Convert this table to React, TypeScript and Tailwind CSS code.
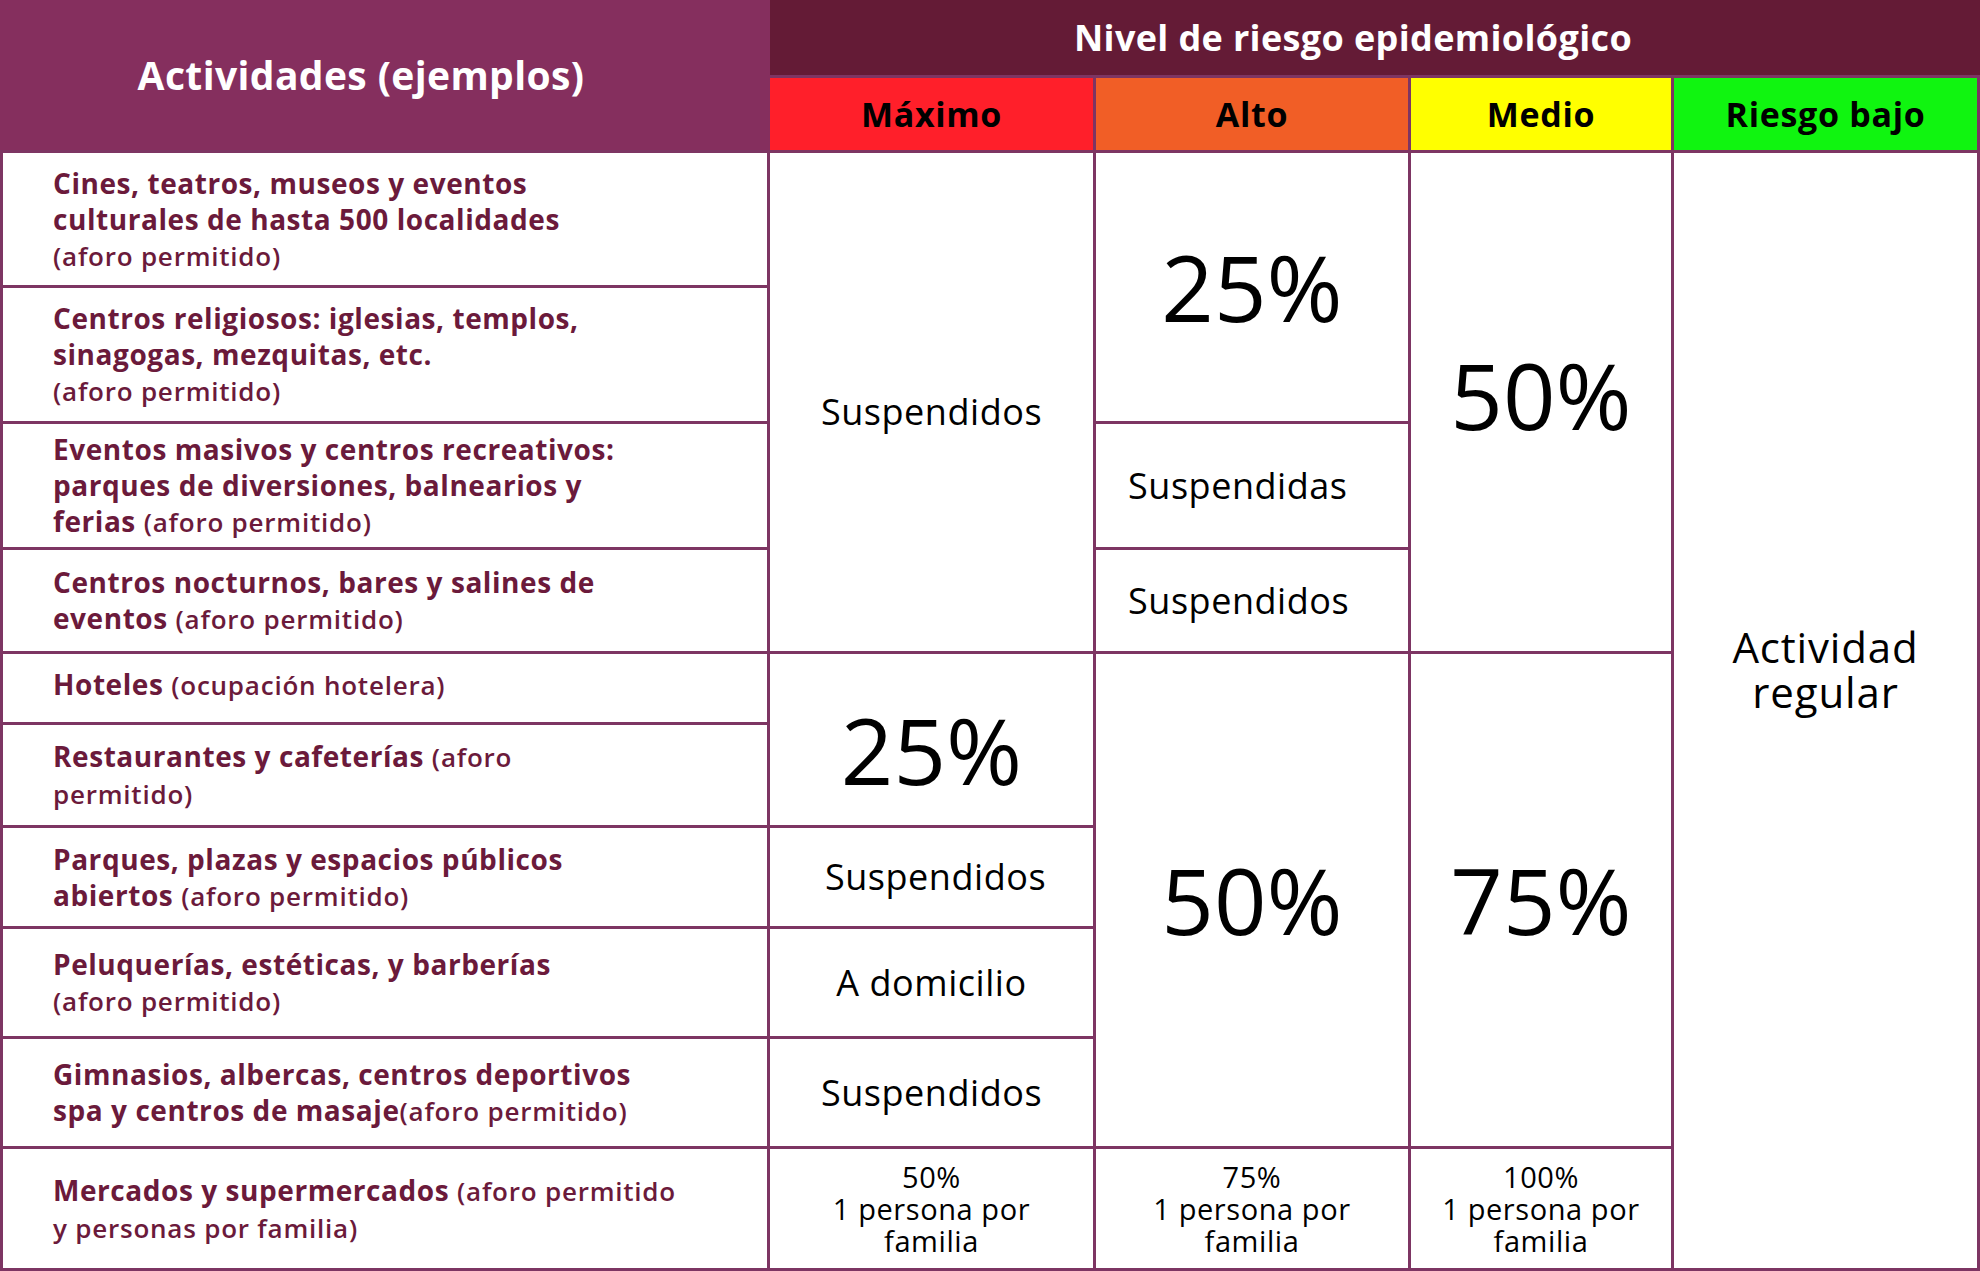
import type { ReactNode } from "react";

const font = { fontFamily: "'Open Sans', 'Noto Sans', sans-serif" };

function Note({ children }: { children: ReactNode }) {
	return (
		<span className="font-semibold text-[26px] tracking-[0.03em]">
			{children}
		</span>
	);
}

function Activity({
	row,
	className = "",
	children,
}: {
	row: string;
	className?: string;
	children: ReactNode;
}) {
	return (
		<div
			className={`${row} col-start-1 flex items-center bg-white pl-[50px] font-bold text-[#6b1a3b] text-[28px] leading-[36px] tracking-[0.02em] whitespace-nowrap ${className}`}
		>
			<p>{children}</p>
		</div>
	);
}

function Cell({
	className,
	children,
}: {
	className: string;
	children?: ReactNode;
}) {
	return (
		<div
			className={`flex items-center justify-center bg-white text-center text-black ${className}`}
		>
			{children}
		</div>
	);
}

function Word({ className, children }: { className: string; children: ReactNode }) {
	return (
		<Cell className={`font-medium text-[36px] tracking-[0.015em] ${className}`}>
			{children}
		</Cell>
	);
}

function Family({ pct, col }: { pct: string; col: string }) {
	return (
		<Cell className={`${col} row-start-12 text-[29px] leading-[32px] tracking-[0.02em]`}>
			<p>
				{pct}
				<br />1 persona por
				<br />
				familia
			</p>
		</Cell>
	);
}

export default function App() {
	return (
		<div
			style={font}
			className="grid h-[1271px] w-[1980px] grid-cols-[764px_323px_312px_260px_303px] grid-rows-[75px_72px_132px_133px_123px_101px_68px_100px_98px_107px_107px_119px] gap-[3px] bg-[#7d3563] px-[3px] pb-[3px]"
		>
			{/* header */}
			<div className="col-start-1 row-span-2 row-start-1 -mx-[3px] flex items-center justify-center bg-[#852f5e] pr-[48px] font-bold text-[39px] text-white tracking-[0.01em]">
				Actividades (ejemplos)
			</div>
			<div className="col-span-4 col-start-2 row-start-1 -mr-[3px] flex items-center justify-center bg-[#641b36] pr-[44px] font-bold text-[36px] text-white tracking-[0.01em]">
				Nivel de riesgo epidemiológico
			</div>
			<div className="col-start-2 row-start-2 flex items-center justify-center bg-[#ff1f2a] font-bold text-[34px] text-black tracking-[0.02em]">
				Máximo
			</div>
			<div className="col-start-3 row-start-2 flex items-center justify-center bg-[#f15e26] font-bold text-[34px] text-black tracking-[0.02em]">
				Alto
			</div>
			<div className="col-start-4 row-start-2 flex items-center justify-center bg-[#ffff00] font-bold text-[34px] text-black tracking-[0.02em]">
				Medio
			</div>
			<div className="col-start-5 row-start-2 flex items-center justify-center bg-[#10f510] font-bold text-[34px] text-black tracking-[0.02em]">
				Riesgo bajo
			</div>

			{/* activities */}
			<Activity row="row-start-3">
				Cines, teatros, museos y eventos
				<br />
				culturales de hasta 500 localidades
				<br />
				<Note>(aforo permitido)</Note>
			</Activity>
			<Activity row="row-start-4">
				Centros religiosos: iglesias, templos,
				<br />
				sinagogas, mezquitas, etc.
				<br />
				<Note>(aforo permitido)</Note>
			</Activity>
			<Activity row="row-start-5">
				Eventos masivos y centros recreativos:
				<br />
				parques de diversiones, balnearios y
				<br />
				ferias <Note>(aforo permitido)</Note>
			</Activity>
			<Activity row="row-start-6">
				Centros nocturnos, bares y salines de
				<br />
				eventos <Note>(aforo permitido)</Note>
			</Activity>
			<Activity row="row-start-7" className="pb-[8px]">
				Hoteles <Note>(ocupación hotelera)</Note>
			</Activity>
			<Activity row="row-start-8">
				Restaurantes y cafeterías <Note>(aforo</Note>
				<br />
				<Note>permitido)</Note>
			</Activity>
			<Activity row="row-start-9">
				Parques, plazas y espacios públicos
				<br />
				abiertos <Note>(aforo permitido)</Note>
			</Activity>
			<Activity row="row-start-10">
				Peluquerías, estéticas, y barberías
				<br />
				<Note>(aforo permitido)</Note>
			</Activity>
			<Activity row="row-start-11">
				Gimnasios, albercas, centros deportivos
				<br />
				spa y centros de masaje<Note>(aforo permitido)</Note>
			</Activity>
			<Activity row="row-start-12">
				Mercados y supermercados <Note>(aforo permitido</Note>
				<br />
				<Note>y personas por familia)</Note>
			</Activity>

			{/* Máximo */}
			<Word className="col-start-2 row-span-4 row-start-3 pt-[20px]">
				Suspendidos
			</Word>
			<Cell className="col-start-2 row-span-2 row-start-7 pt-[20px] text-[92px]">
				25%
			</Cell>
			<Word className="col-start-2 row-start-9 pl-[8px]">Suspendidos</Word>
			<Word className="col-start-2 row-start-10">A domicilio</Word>
			<Word className="col-start-2 row-start-11">Suspendidos</Word>
			<Family pct="50%" col="col-start-2" />

			{/* Alto */}
			<Cell className="col-start-3 row-span-2 row-start-3 text-[92px]">
				25%
			</Cell>
			<Word className="col-start-3 row-start-5 !justify-start pl-[32px]">
				Suspendidas
			</Word>
			<Word className="col-start-3 row-start-6 !justify-start pl-[32px]">
				Suspendidos
			</Word>
			<Cell className="col-start-3 row-span-5 row-start-7 text-[92px]">
				50%
			</Cell>
			<Family pct="75%" col="col-start-3" />

			{/* Medio */}
			<Cell className="col-start-4 row-span-4 row-start-3 pb-[14px] text-[92px]">
				50%
			</Cell>
			<Cell className="col-start-4 row-span-5 row-start-7 text-[92px]">
				75%
			</Cell>
			<Family pct="100%" col="col-start-4" />

			{/* Riesgo bajo */}
			<Cell className="col-start-5 row-span-10 row-start-3 pb-[84px] text-[42px] leading-[45px] tracking-[0.02em]">
				<p>
					Actividad
					<br />
					regular
				</p>
			</Cell>
		</div>
	);
}
